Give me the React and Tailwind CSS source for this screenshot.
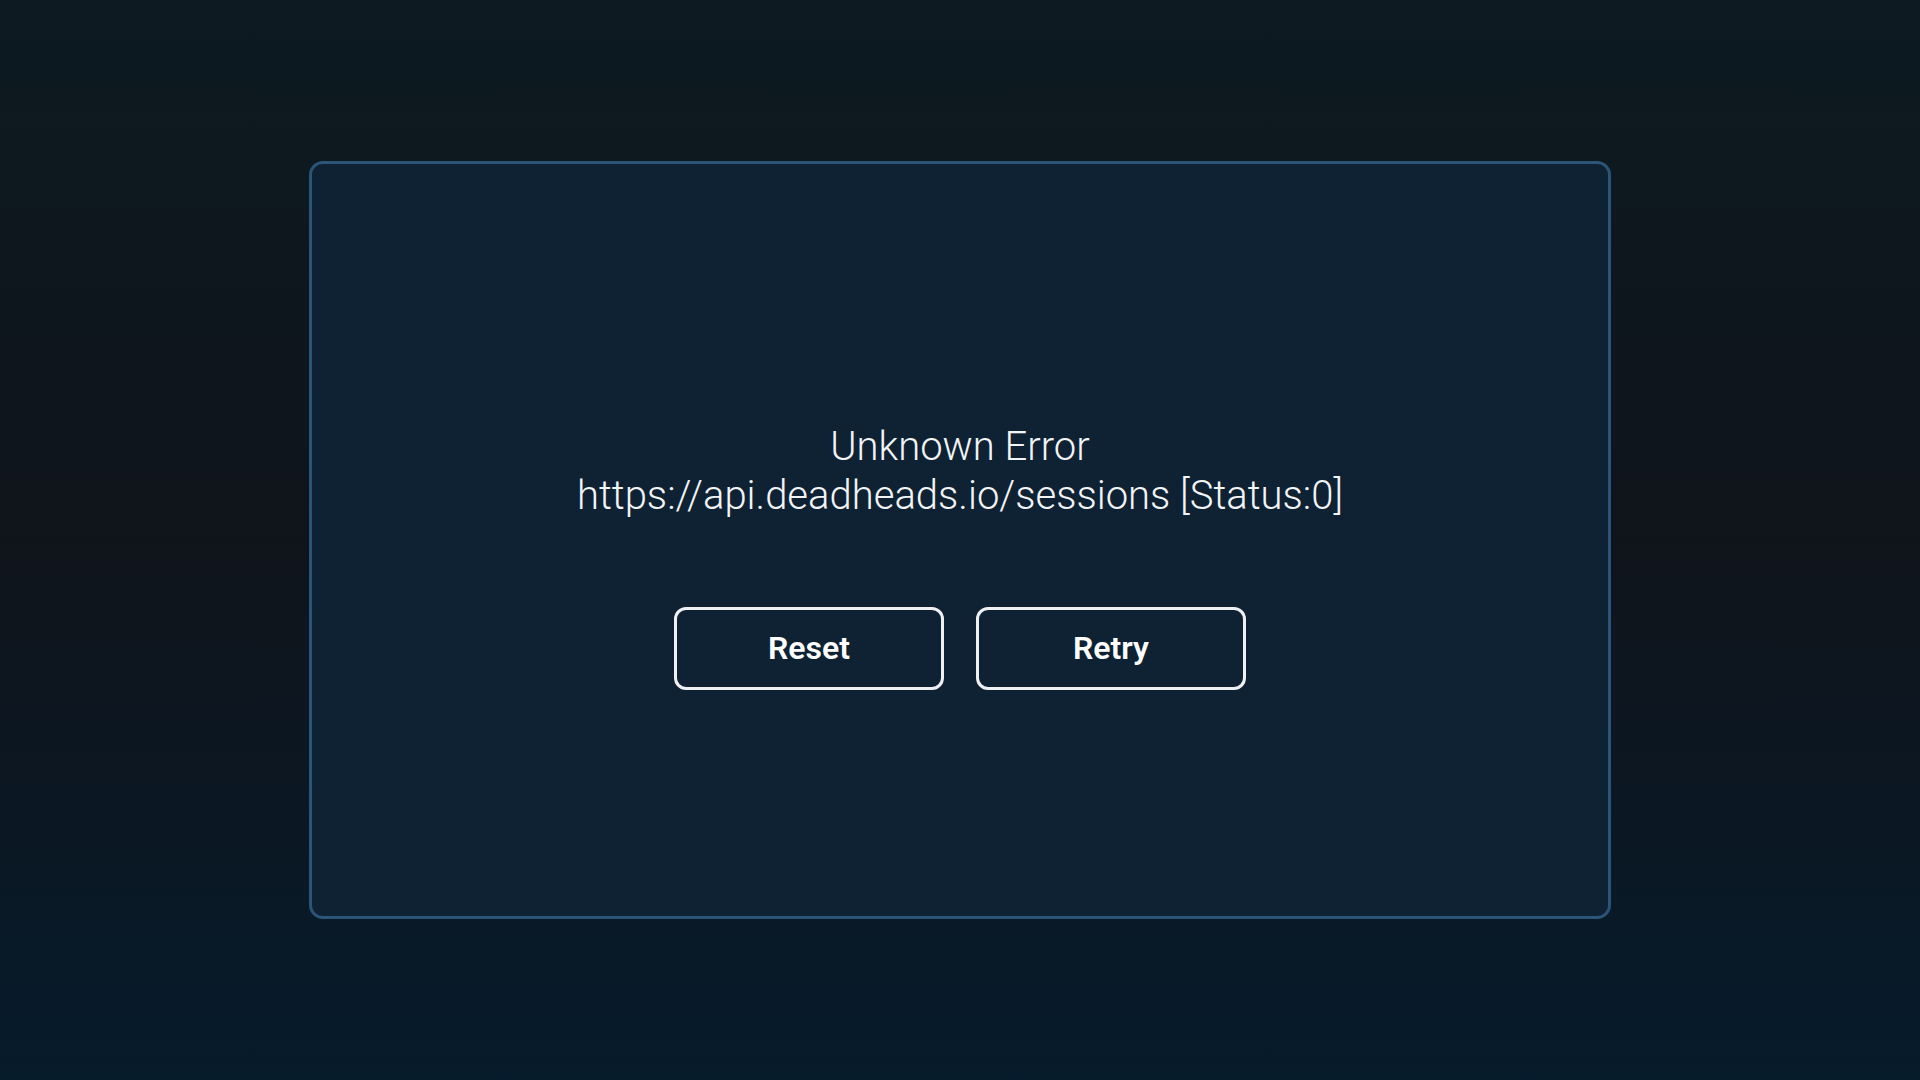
import React from "react";

// Pantalla de error de conexión
function ErrorPanel({ title, detail, onReset, onRetry }) {
  return (
    <div className="w-[1302px] h-[758px] pt-[31px] rounded-[14px] border-[3px] border-[#2b5479] bg-[#0e2234] flex flex-col items-center justify-center">
      <div className="text-center text-[#f2f4f6] text-[40px] leading-[49px] font-light">
        <p>{title}</p>
        <p>{detail}</p>
      </div>
      <div className="flex gap-[32px] mt-[87px]">
        <button
          onClick={onReset}
          className="w-[270px] h-[83px] rounded-[12px] border-[3px] border-[#eef0f2] bg-[#0e2234] text-white text-[32px] font-semibold"
        >
          Reset
        </button>
        <button
          onClick={onRetry}
          className="w-[270px] h-[83px] rounded-[12px] border-[3px] border-[#eef0f2] bg-[#0e2234] text-white text-[32px] font-semibold"
        >
          Retry
        </button>
      </div>
    </div>
  );
}

export default function App() {
  return (
    <div
      className="w-[1920px] h-[1080px] flex items-center justify-center bg-gradient-to-b from-[#0d1a21] via-[#0f141b] to-[#061b2b]"
      style={{ fontFamily: "Roboto, 'Noto Sans', sans-serif" }}
    >
      <ErrorPanel
        title="Unknown Error"
        detail="https://api.deadheads.io/sessions [Status:0]"
        onReset={() => {}}
        onRetry={() => {}}
      />
    </div>
  );
}
